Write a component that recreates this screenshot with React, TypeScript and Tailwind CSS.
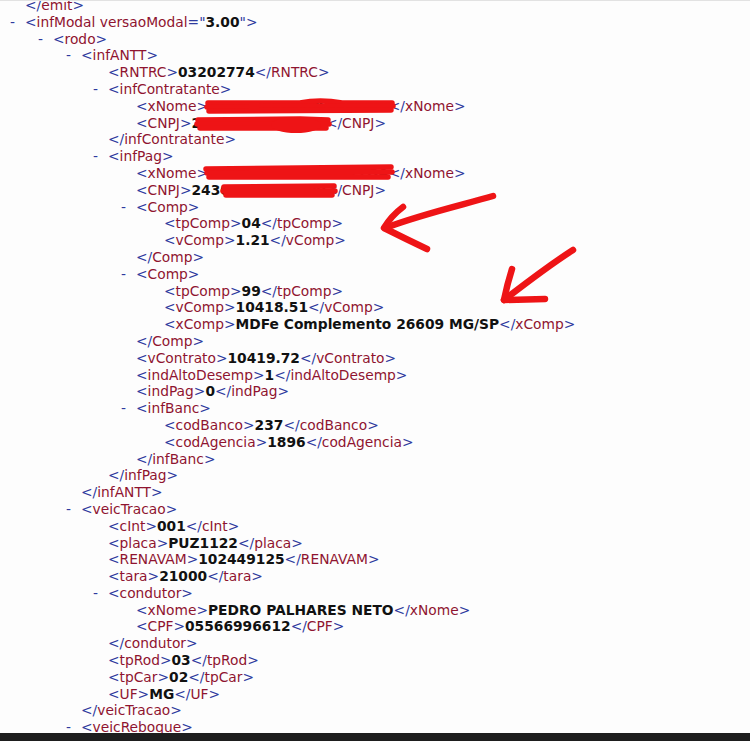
import React from 'react';

type Row =
  | { d: number; k: 'o'; n: string; a?: [string, string] }
  | { d: number; k: 'c'; n: string }
  | { d: number; k: 'l'; n: string; v: string };

// indentation of the "<" per nesting depth
const pad: Record<number, string> = {
  0: 'pl-[25px]',
  1: 'pl-[53px]',
  2: 'pl-[81px]',
  3: 'pl-[108px]',
  4: 'pl-[136px]',
  5: 'pl-[164px]',
};

const rows: Row[] = [
  { d: 0, k: 'c', n: 'emit' },
  { d: 0, k: 'o', n: 'infModal', a: ['versaoModal', '3.00'] },
  { d: 1, k: 'o', n: 'rodo' },
  { d: 2, k: 'o', n: 'infANTT' },
  { d: 3, k: 'l', n: 'RNTRC', v: '03202774' },
  { d: 3, k: 'o', n: 'infContratante' },
  { d: 4, k: 'l', n: 'xNome', v: 'SXXXXX & XXXXX LTDA' },
  { d: 4, k: 'l', n: 'CNPJ', v: '20000000000009' },
  { d: 3, k: 'c', n: 'infContratante' },
  { d: 3, k: 'o', n: 'infPag' },
  { d: 4, k: 'l', n: 'xNome', v: 'SXXXXX & XXXXX LTDA' },
  { d: 4, k: 'l', n: 'CNPJ', v: '24300000000000' },
  { d: 4, k: 'o', n: 'Comp' },
  { d: 5, k: 'l', n: 'tpComp', v: '04' },
  { d: 5, k: 'l', n: 'vComp', v: '1.21' },
  { d: 4, k: 'c', n: 'Comp' },
  { d: 4, k: 'o', n: 'Comp' },
  { d: 5, k: 'l', n: 'tpComp', v: '99' },
  { d: 5, k: 'l', n: 'vComp', v: '10418.51' },
  { d: 5, k: 'l', n: 'xComp', v: 'MDFe Complemento 26609 MG/SP' },
  { d: 4, k: 'c', n: 'Comp' },
  { d: 4, k: 'l', n: 'vContrato', v: '10419.72' },
  { d: 4, k: 'l', n: 'indAltoDesemp', v: '1' },
  { d: 4, k: 'l', n: 'indPag', v: '0' },
  { d: 4, k: 'o', n: 'infBanc' },
  { d: 5, k: 'l', n: 'codBanco', v: '237' },
  { d: 5, k: 'l', n: 'codAgencia', v: '1896' },
  { d: 4, k: 'c', n: 'infBanc' },
  { d: 3, k: 'c', n: 'infPag' },
  { d: 2, k: 'c', n: 'infANTT' },
  { d: 2, k: 'o', n: 'veicTracao' },
  { d: 3, k: 'l', n: 'cInt', v: '001' },
  { d: 3, k: 'l', n: 'placa', v: 'PUZ1122' },
  { d: 3, k: 'l', n: 'RENAVAM', v: '102449125' },
  { d: 3, k: 'l', n: 'tara', v: '21000' },
  { d: 3, k: 'o', n: 'condutor' },
  { d: 4, k: 'l', n: 'xNome', v: 'PEDRO PALHARES NETO' },
  { d: 4, k: 'l', n: 'CPF', v: '05566996612' },
  { d: 3, k: 'c', n: 'condutor' },
  { d: 3, k: 'l', n: 'tpRod', v: '03' },
  { d: 3, k: 'l', n: 'tpCar', v: '02' },
  { d: 3, k: 'l', n: 'UF', v: 'MG' },
  { d: 2, k: 'c', n: 'veicTracao' },
  { d: 2, k: 'o', n: 'veicReboque' },
];

const B = ({ children }: { children: React.ReactNode }) => (
  <span className="text-[#2e3a9e]">{children}</span>
);
const N = ({ children }: { children: React.ReactNode }) => (
  <span className="text-[#8f1430]">{children}</span>
);

function Line({ row }: { row: Row }) {
  return (
    <div className={`${pad[row.d]} h-[16.8px] whitespace-nowrap`}>
      {row.k === 'o' && (
        <span className="inline-block w-[15px] -ml-[15px] text-[#2e3a9e]">-</span>
      )}
      {row.k === 'o' && (
        <>
          <B>&lt;</B>
          <N>{row.n}</N>
          {row.a && (
            <>
              {' '}
              <N>{row.a[0]}</N>
              <B>="</B>
              <b className="font-bold text-[#111]">{row.a[1]}</b>
              <B>"</B>
            </>
          )}
          <B>&gt;</B>
        </>
      )}
      {row.k === 'c' && (
        <>
          <B>&lt;/</B>
          <N>{row.n}</N>
          <B>&gt;</B>
        </>
      )}
      {row.k === 'l' && (
        <>
          <B>&lt;</B>
          <N>{row.n}</N>
          <B>&gt;</B>
          <b className="font-bold text-[#111]">{row.v}</b>
          <B>&lt;/</B>
          <N>{row.n}</N>
          <B>&gt;</B>
        </>
      )}
    </div>
  );
}

export default function App() {
  return (
    <div className="w-[750px] h-[741px] flex flex-col bg-[#fdfdfd] overflow-hidden">
      <div className="relative flex-1 overflow-hidden border-t border-[#e2e2e2]">
        <div className="-mt-[4px] text-[13.8px] leading-[16.8px] font-['DejaVu_Sans',Verdana,sans-serif]">
          {rows.map((r, i) => (
            <Line key={i} row={r} />
          ))}
        </div>

        {/* red marker scribbles and arrows */}
        <svg className="absolute inset-0 pointer-events-none" width="750" height="733" viewBox="0 -1 750 733">
          <g stroke="#ee1416" strokeLinecap="round" strokeLinejoin="round" fill="none">
            <g strokeWidth="5.5">
              <path d="M208 101 L300 101 Q320 97 342 101 L392 101" />
              <path d="M207 105 L393 104" />
              <path d="M209 109 L391 108" />
              <path d="M198 118 L300 117 L328 118" />
              <path d="M197 122 L329 122" />
              <path d="M200 126 L326 126" />
              <path d="M206 167 L391 165" />
              <path d="M207 171 L392 170" />
              <path d="M209 175 L388 175" />
              <path d="M224 185 L334 184" />
              <path d="M223 189 L335 189" />
              <path d="M226 193 L332 193" />
            </g>
            <ellipse cx="296" cy="123" rx="25" ry="8" fill="#ee1416" stroke="none" />
            <g strokeWidth="6.5">
              <path d="M493 194 C462 203 422 212 385 226" />
              <path d="M403 205 Q391 214 384 226 Q406 237 427 247" />
              <path d="M573 248 C548 264 526 281 504 298" />
              <path d="M512 267 Q507 283 504 298 L545 297" />
            </g>
          </g>
        </svg>
      </div>
      <div className="h-[8px] bg-[#1e1e1e]" />
    </div>
  );
}
